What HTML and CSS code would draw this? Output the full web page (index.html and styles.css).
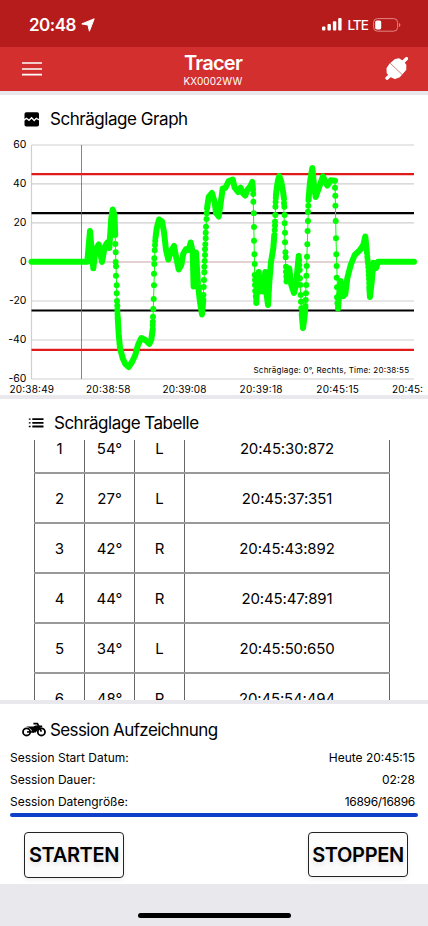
FILE: index.html
```
<!DOCTYPE html>
<html lang="de">
<head>
<meta charset="utf-8">
<meta name="viewport" content="width=device-width, initial-scale=1">
<title>Tracer</title>
<link rel="stylesheet" href="styles.css">
</head>
<body>

<div class="statusbar">
  <div class="clock">
    <span>20:48</span>
    <svg width="14" height="14" viewBox="0 0 14 14"><path d="M13.2.8 8.4 13.2 7 7 .8 5.9z" fill="#fff" stroke="#fff" stroke-linejoin="round"/></svg>
  </div>
  <div class="signal">
    <svg width="20" height="13" viewBox="0 0 20 13" fill="#fff">
      <rect x="0" y="8.5" width="3.4" height="4" rx="1"/>
      <rect x="5.5" y="6" width="3.4" height="6.5" rx="1"/>
      <rect x="10.9" y="3.3" width="3.4" height="9.2" rx="1"/>
      <rect x="16.2" y="0" width="3.4" height="12.5" rx="1"/>
    </svg>
    <span>LTE</span>
    <svg width="28" height="14" viewBox="0 0 28 14">
      <rect x=".6" y=".6" width="24" height="12.6" rx="3.8" fill="none" stroke="#e28483"/>
      <rect x="2.2" y="2.4" width="6" height="9" rx="1.6" fill="#fff"/>
      <path d="M26 5v4q1.4-.6 1.4-2T26 5z" fill="#e28483"/>
    </svg>
  </div>
</div>

<div class="navbar">
  <svg class="menu" width="20" height="14" viewBox="0 0 20 14"><path d="M0 1h20M0 7h20M0 12.6h20" stroke="#fff" stroke-width="1.7"/></svg>
  <div class="title">
    <h1>Tracer</h1>
    <p>KX0002WW</p>
  </div>
  <svg class="plug" width="24" height="24" viewBox="0 0 24 24">
    <path d="M3 21.2 7 17.5M18 6 22.5 1.6" stroke="#fff" stroke-width="3.4" stroke-linecap="round"/>
    <path d="M11.5 2.6 15 2 19 4.6 21.6 8 21.6 12.5 19 15.6 15.5 19.6 11 21.3 7 19.6 3.4 16 3.2 11.5 6.2 7z" fill="#fff" stroke="#fff" stroke-width="1.4" stroke-linejoin="round"/>
    <path d="M6.2 6.2 18 17.4" stroke="#b86464" stroke-width=".8"/>
  </svg>
</div>

<div class="card graph">
  <h2>
    <svg width="16" height="15" viewBox="0 0 16 15"><rect x=".5" y=".3" width="14.5" height="14.2" rx="1.8"/><path d="M0 8.2 2.5 6.3 5 8.3 7.6 5.7 10.2 8.4 12.3 6.3 15.5 8" fill="none" stroke="#fff" stroke-width="1.4"/></svg>
    Schräglage Graph
  </h2>
  <svg class="chart" width="428" height="260" viewBox="0 0 428 260">
    <path class="grid" d="M31.5 10H414M31.5 48.9H414M31.5 87.9H414M31.5 166H414M31.5 205H414M31.5 244H414M31.5 10V244"/>
    <path class="zero" d="M31.5 127H414"/>
    <path class="limit-red" d="M31.5 39.2H414M31.5 214.8H414"/>
    <path class="limit-black" d="M31.5 78.2H414M31.5 175.5H414"/>
    <path class="cursor" d="M81.5 10V244"/>
    <!-- connecting line where samples are far apart -->
    <path class="link" d="M115.3 100V109L116 131 117 166 117.7 183M152.7 193 154 150 155 110 156.7 93M203.3 163 206.7 78M253 55 253.8 92 254.7 140 256.3 168M274.3 100 276.3 57M283.3 58 285.7 131 286.7 147M298.7 120 301.7 180M305.3 170 307.3 109 308.7 63M335 46 336 103 338 174M366.7 115 370 162"/>
    <!-- closely spaced samples -->
    <path class="run" d="M31.5 126.8H87.3L90 96 93.3 133.3 95.3 115 98.7 109.5 102 127 104.7 112 107.3 107.5 109.3 113 111.3 83 112.7 74.5 114.5 80 115.2 100
      M117.7 182 118.7 199 120 213 122.7 223.3 125.3 229 128.7 232 132 227 135.3 220 138 210 141.3 203 145.3 205 149.3 209 151.3 205 152.7 194
      M155.5 103 156.7 93.3 159 84.5 162 86.5 164 97 166 115 168.3 124.5 170.7 117 174 111 176.7 125 178.7 134.5 181.3 130 183.3 118.5 186 114 188.7 115 190.7 107.5 192.7 117 193.6 151.5 196 117.5 198 150 200 167 202 179.5 203.3 165
      M207 73.5 208.7 62 212 58 214.7 67 216 78 218.7 81.5 220.7 68 222.7 53.5 225.3 53 228.7 46 232.7 44.5 234.7 52.7 238 57 240.7 52.7 242.7 58 245.3 60.5 247.3 55 250 51.7 252.3 47 253 55
      M256.3 168 257 150 258.7 137 260 156.5 262 143.3 263.3 156.5 265.3 137 266.7 160 268 170 269.3 147 271 127 273.3 113.3 274.3 100
      M276 60 276.5 55 278 45 279.3 41.2 281.3 47 283.3 58.3 284 64
      M286.5 146.5 289.3 133.5 291.3 150 294 158 296 150 298.7 121
      M301.7 179 303 193 304.7 180 305.4 171
      M308.5 65 310 47 312.3 33 314 50 315.7 62 319.3 51.7 323 41.3 325.3 46.7 327.3 50.5 330.7 45.3 335 45.7
      M338 173.5 339 160 340.7 146 343.3 161.2 345.3 159 347.3 143.3 350.7 130 354.7 120 360 115 363.3 110 365.3 101.5 366.7 115
      M369.3 152 370 162 371.7 147 373.3 127.7 376 133 378 126.8H414"/>
    <!-- single samples -->
    <path class="dots" d="M115.3 109h0M115.7 117.3h0M115.7 127h0M116 131.3h0M116 140.7h0M116.7 150.3h0M116.7 158.3h0M117 166h0M117.3 170.7h0M117.3 175h0M117.5 179h0
      M152.7 190h0M152.8 186.7h0M153 181.7h0M153.3 174h0M153.7 164h0M154 150.3h0M154 138.7h0M154.3 129h0M154.3 123.3h0M154.7 115.3h0M155 110h0M155.2 106h0
      M203.4 160h0M203.7 152h0M204 145h0M204.3 137.3h0M204.3 131.7h0M204.7 126h0M205 120h0M205 114.3h0M205.3 109.3h0M205.7 103.3h0M205.7 97.7h0M206 91.7h0M206.5 84h0M206.7 78.3h0
      M253.3 59h0M253.4 66.7h0M253.8 78.3h0M254 92h0M254 105.7h0M254.4 119.3h0M254.7 129h0M254.7 140h0M255 145h0M255 150h0M255.2 156h0M255.8 161.5h0
      M274.7 95h0M275 90.5h0M275 86.7h0M275.3 80h0M275.4 71.7h0M275.6 67h0M275.8 63h0
      M284 68.3h0M284.3 71.7h0M284.6 80h0M284.7 88.3h0M285 97.7h0M285 107.3h0M285.4 117.3h0M285.7 122.3h0M286 131.7h0M286 136.7h0M286.3 141.5h0
      M299.2 125h0M299.3 130h0M299.7 135h0M300 143.3h0M300.3 150h0M300.7 160h0M301 166.7h0M301.3 173.3h0
      M305.7 165h0M306 158.3h0M306.3 150h0M306.4 140.7h0M306.7 131h0M307 121.7h0M307.3 109.3h0M307.6 96h0M308 86h0M308 76.7h0M308.3 70.7h0
      M335 52.7h0M335.3 60.7h0M335.4 70.7h0M335.7 86h0M336 103.3h0M336.3 119.3h0M336.6 131h0M336.7 142.7h0M337 152.3h0M337 162.3h0M337.4 168.3h0
      M367 118h0M367.3 121.7h0M367.7 125h0M368 128.3h0M368.3 132h0M368.6 136h0M368.8 140h0M369 144h0M369.2 148h0"/>
    <g class="ylabels">
      <text x="26.5" y="13.2">60</text>
      <text x="26.5" y="52.1">40</text>
      <text x="26.5" y="91.1">20</text>
      <text x="26.5" y="130.2">0</text>
      <text x="26.5" y="169.1">-20</text>
      <text x="26.5" y="208.1">-40</text>
      <text x="26.5" y="247.1">-60</text>
    </g>
    <g class="xlabels">
      <text x="9.5" y="258.3" textLength="44.5">20:38:49</text>
      <text x="86" y="258.3" textLength="44.5">20:38:58</text>
      <text x="162.5" y="258.3" textLength="44">20:39:08</text>
      <text x="239.5" y="258.3" textLength="43">20:39:18</text>
      <text x="316.3" y="258.3" textLength="42.5">20:45:15</text>
      <text x="392" y="258.3" textLength="31">20:45:</text>
    </g>
    <text class="info" x="253.5" y="237.5" textLength="155.5">Schräglage: 0°, Rechts, Time: 20:38:55</text>
  </svg>
</div>

<div class="card list">
  <h2>
    <svg width="16" height="10" viewBox="0 0 16 10"><path d="M4.3 1.2H15.5M4.3 4.8H15.5M4.3 8.5H15.5" stroke="#000" stroke-width="1.8"/><path d="M.8 1.2h1.8M.8 4.8h1.8M.8 8.5h1.8" stroke="#000" stroke-width="1.3"/></svg>
    Schräglage Tabelle
  </h2>
  <div class="scroll">
    <table>
      <tr><td>1</td><td>54°</td><td>L</td><td class="time">20:45:30:872</td></tr>
      <tr><td>2</td><td>27°</td><td>L</td><td class="time">20:45:37:351</td></tr>
      <tr><td>3</td><td>42°</td><td>R</td><td class="time">20:45:43:892</td></tr>
      <tr><td>4</td><td>44°</td><td>R</td><td class="time">20:45:47:891</td></tr>
      <tr><td>5</td><td>34°</td><td>L</td><td class="time">20:45:50:650</td></tr>
      <tr><td>6</td><td>48°</td><td>R</td><td class="time">20:45:54:494</td></tr>
    </table>
  </div>
</div>

<div class="card session">
  <h2>
    <svg width="24" height="16" viewBox="0 0 24 16" fill="none" stroke="#000">
      <circle cx="4.6" cy="9.9" r="3.6" stroke-width="1.8"/>
      <circle cx="19.4" cy="9.9" r="3.6" stroke-width="1.8"/>
      <path d="M11.4 1.6h4l4 8" stroke-width="1.7"/>
      <path d="M4.2 4.4H11.5L13.6 3.4 17.2 3.6 20.2 3.6V5.2L17.8 5.8 13.6 10.6 10.6 10.6 9.2 7.4 7 5.8z" fill="#000" stroke="none"/>
      <path d="M5 9.9h7" stroke-width="1.6"/>
    </svg>
    Session Aufzeichnung
  </h2>
  <dl>
    <div><dt>Session Start Datum:</dt><dd>Heute 20:45:15</dd></div>
    <div><dt>Session Dauer:</dt><dd>02:28</dd></div>
    <div><dt>Session Datengröße:</dt><dd class="size">16896/16896</dd></div>
  </dl>
  <div class="progress"></div>
  <div class="buttons">
    <button type="button">STARTEN</button>
    <button type="button" class="stop">STOPPEN</button>
  </div>
</div>

<div class="home"></div>

</body>
</html>
```
FILE: styles.css
```
* { box-sizing: border-box; }
body { margin: 0; width: 428px; height: 926px; overflow: hidden; background: #e9e8ed; color: #000; font-family: Inter, "Liberation Sans", sans-serif; }
h1, h2, p, dl, dd { margin: 0; font-weight: 400; }
svg { display: block; flex: none; }

.statusbar { display: flex; justify-content: space-between; height: 47px; padding: 17px 27px 0 29px; background: #b71c1c; color: #fff; }
.clock, .signal { display: flex; align-items: center; height: 15px; }
.clock { gap: 5px; font-size: 17px; font-weight: 600; letter-spacing: -.5px; }
.signal { gap: 5px; font-size: 13.5px; font-weight: 500; letter-spacing: -.9px; }

.navbar { display: flex; justify-content: space-between; height: 44px; padding: 0 20px 0 22px; background: #d32f2f; color: #fff; }
.menu { margin-top: 15px; }
.plug { margin-top: 10px; }
.title { width: 80px; text-align: center; }
.title h1 { margin-top: 5px; font-size: 20px; line-height: 22px; font-weight: 600; letter-spacing: -.75px; }
.title p { font-size: 10px; line-height: 14px; letter-spacing: .1px; }

.card { background: #fff; border-top: 4px solid #e9e8ed; }
h2 { display: flex; align-items: center; font-size: 17px; line-height: 22px; letter-spacing: -.45px; }

.graph { height: 304px; padding-top: 13px; }
.graph h2 { padding-left: 24px; gap: 10px; }
.chart { margin-top: 5px; }
.chart path { fill: none; }
.grid { stroke: #cfcfcf; stroke-width: 1.2; }
.zero { stroke: #c9a5a5; }
.chart .limit-red { stroke: #e01a1a; stroke-width: 2.2; }
.limit-black { stroke: #000; stroke-width: 2.2; }
.cursor { stroke: #b5484f; stroke-width: .8; }
.link { stroke: #0f0; stroke-width: 1; }
.run, .dots { stroke: #0f0; stroke-width: 6; stroke-linecap: round; stroke-linejoin: round; }
.ylabels { font-size: 10.5px; text-anchor: end; }
.xlabels { font-size: 10px; }
.info { font-size: 8px; }

.list { height: 305px; padding-top: 13px; }
.list h2 { padding-left: 28px; gap: 10px; letter-spacing: -.5px; }
.scroll { height: 260px; margin-top: 6px; overflow: hidden; }
table { width: 356px; margin: -18px 0 0 34px; border-collapse: collapse; table-layout: fixed; }
td { width: 50px; height: 50px; padding: 0; border: solid #666; border-width: 2px 1px; border-color: #999 #666; text-align: center; font-size: 15px; }
td.time { width: 205px; letter-spacing: -.15px; }

.session { height: 184px; padding-top: 15px; }
.session h2 { padding-left: 22px; gap: 4px; letter-spacing: -.6px; }
dl { padding: 6px 13px 0 10px; font-size: 12px; line-height: 22px; }
dl div { display: flex; justify-content: space-between; }
dd.size { letter-spacing: -.3px; }
.progress { height: 4px; margin: 0 10px; border-radius: 2px; background: #103fc9; }
.buttons { display: flex; justify-content: space-between; padding: 15px 20px 0 24px; }
button { width: 100px; height: 46px; padding: 0; border: 1px solid #222; border-radius: 4px; background: #fcfcfc; color: #000; font: 600 20px Inter, "Liberation Sans", sans-serif; letter-spacing: -.35px; text-shadow: 0 2px 5px #ddd; box-shadow: 0 2px 5px #eee; }
button.stop { height: 45px; }

.home { width: 153px; height: 5px; margin: 29px 0 0 138px; border-radius: 3px; background: #000; }
```
